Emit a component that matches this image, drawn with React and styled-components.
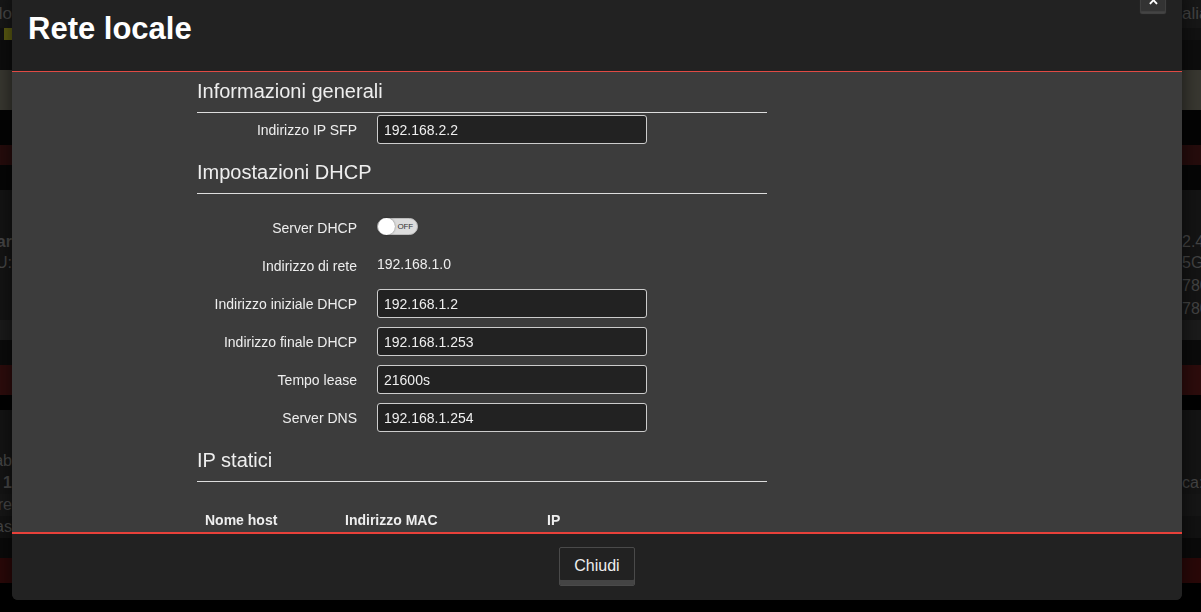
import React from 'react';
import styled, { createGlobalStyle } from 'styled-components';

const GlobalStyle = createGlobalStyle`
  html, body {
    margin: 0;
    padding: 0;
    height: 100%;
    background: #000;
    overflow: hidden;
  }
  body {
    font-family: "Liberation Sans", Arial, sans-serif;
    color: #eee;
  }
`;

// page behind the dialog, dimmed
const bands = [
  { h: 28, bg: '#171717', left: 'Pannello', right: 'alia', size: 17 },
  { h: 12, bg: '#121212', accent: '#5c5c12' },
  { h: 30, bg: '#0d0d0d' },
  { h: 40, bg: '#393831' },
  { h: 35, bg: '#040404' },
  { h: 20, bg: '#260c0c' },
  { h: 25, bg: '#060606' },
  { h: 42, bg: '#141414' },
  { h: 20, bg: '#141414', left: 'Standar', right: '2.4G', bold: true },
  { h: 22, bg: '#141414', left: 'SSID U:', right: '5GH' },
  { h: 24, bg: '#141414', right: '780' },
  { h: 22, bg: '#141414', right: '780' },
  { h: 20, bg: '#1b1b1b' },
  { h: 25, bg: '#0b0b0b' },
  { h: 30, bg: '#2d0c0c' },
  { h: 15, bg: '#020202' },
  { h: 40, bg: '#141414' },
  { h: 22, bg: '#141414', left: 'Tab' },
  { h: 22, bg: '#141414', left: '1', right: 'ca:', bold: true },
  { h: 22, bg: '#161616', left: 'Ore' },
  { h: 22, bg: '#121212', left: 'Bas' },
  { h: 20, bg: '#0a0a0a' },
  { h: 25, bg: '#2a0808' },
  { h: 60, bg: '#000' },
];

export default function App() {
  return (
    <>
      <GlobalStyle />
      <Page>
        {bands.map((b, i) => (
          <Band key={i} $h={b.h} $bg={b.bg}>
            <LeftEdge $size={b.size} $bold={b.bold}>
              {b.accent ? <Accent $color={b.accent} /> : <EdgeText>{b.left}</EdgeText>}
            </LeftEdge>
            <RightEdge $size={b.size}>{b.right}</RightEdge>
          </Band>
        ))}
      </Page>

      <Dialog>
        <CloseBtn>✕</CloseBtn>
        <Header>
          <Title>Rete locale</Title>
        </Header>

        <Body>
          <Column>
            <SectionTitle>Informazioni generali</SectionTitle>
            <Row $top={2}>
              <Label>Indirizzo IP SFP</Label>
              <Input defaultValue="192.168.2.2" />
            </Row>

            <SectionTitle $top={16}>Impostazioni DHCP</SectionTitle>
            <Row $top={19}>
              <Label>Server DHCP</Label>
              <Switch>
                <Knob />
                <SwitchText>OFF</SwitchText>
              </Switch>
            </Row>
            <Row>
              <Label>Indirizzo di rete</Label>
              <Value>192.168.1.0</Value>
            </Row>
            <Row>
              <Label>Indirizzo iniziale DHCP</Label>
              <Input defaultValue="192.168.1.2" />
            </Row>
            <Row>
              <Label>Indirizzo finale DHCP</Label>
              <Input defaultValue="192.168.1.253" />
            </Row>
            <Row>
              <Label>Tempo lease</Label>
              <Input defaultValue="21600s" />
            </Row>
            <Row>
              <Label>Server DNS</Label>
              <Input defaultValue="192.168.1.254" />
            </Row>

            <SectionTitle $top={16}>IP statici</SectionTitle>
            <Table>
              <thead>
                <tr>
                  <Th $w={140}>Nome host</Th>
                  <Th $w={202}>Indirizzo MAC</Th>
                  <Th $w={228}>IP</Th>
                </tr>
              </thead>
              <tbody>
                <tr>
                  <Td>gateway</Td>
                  <Td>00:00:00:00:00:00</Td>
                  <Td>192.168.1.10</Td>
                </tr>
              </tbody>
            </Table>
          </Column>
        </Body>

        <Footer>
          <Button>Chiudi</Button>
        </Footer>
      </Dialog>
    </>
  );
}

const Page = styled.div`
  display: flex;
  flex-direction: column;
  height: 612px;
  overflow: hidden;
`;

const Band = styled.div`
  flex: 0 0 ${(p) => p.$h}px;
  background: ${(p) => p.$bg};
  display: flex;
  justify-content: space-between;
  align-items: center;
  overflow: hidden;
`;

const LeftEdge = styled.div`
  width: 12px;
  overflow: hidden;
  display: flex;
  justify-content: flex-end;
  white-space: nowrap;
  font-size: ${(p) => p.$size || 16}px;
  font-weight: ${(p) => (p.$bold ? 'bold' : 'normal')};
  color: #474747;
`;

const EdgeText = styled.span`
  flex-shrink: 0;
`;

const RightEdge = styled.div`
  width: 19px;
  white-space: nowrap;
  font-size: ${(p) => p.$size || 16}px;
  color: #444;
  overflow: hidden;
`;

const Accent = styled.span`
  display: block;
  width: 8px;
  height: 12px;
  background: ${(p) => p.$color};
`;

const Dialog = styled.div`
  position: fixed;
  left: 12px;
  top: -10px;
  width: 1170px;
  height: 610px;
  display: flex;
  flex-direction: column;
  border-radius: 6px;
  overflow: hidden;
  background: #222;
  box-shadow: 0 0 20px rgba(0, 0, 0, 0.6);
`;

const CloseBtn = styled.div`
  position: absolute;
  top: -4px;
  right: 16px;
  width: 26px;
  height: 26px;
  box-sizing: border-box;
  background: #333;
  border: 1px solid #3f3f3f;
  border-radius: 2px;
  box-shadow: 0 2px 1px #444;
  display: flex;
  align-items: flex-end;
  justify-content: center;
  padding-bottom: 4px;
  color: #fff;
  font-size: 13px;
  font-weight: bold;
  line-height: 1;
`;

const Header = styled.div`
  flex: 0 0 81px;
  background: #222;
  border-bottom: 1px solid #e04a44;
  padding: 0 16px;
  display: flex;
  align-items: flex-start;
`;

const Title = styled.h1`
  margin: 21px 0 0;
  font-size: 31px;
  line-height: 36px;
  font-weight: bold;
  color: #fff;
`;

const Body = styled.div`
  flex: 0 0 460px;
  background: #3c3c3c;
  overflow: hidden;
  border-bottom: 2px solid #e8413a;
`;

const Column = styled.div`
  width: 570px;
  margin-left: 185px;
  padding-top: 7px;
`;

const SectionTitle = styled.h3`
  margin: ${(p) => p.$top || 0}px 0 0;
  padding-bottom: 9px;
  font-size: 20px;
  line-height: 24px;
  font-weight: normal;
  color: #eee;
  border-bottom: 1px solid #ddd;
`;

const Row = styled.div`
  display: grid;
  grid-template-columns: 160px 270px;
  column-gap: 20px;
  align-items: center;
  height: 29px;
  margin-top: ${(p) => (p.$top === undefined ? 9 : p.$top)}px;
`;

const Label = styled.label`
  text-align: right;
  font-size: 14px;
  color: #eee;
`;

const Value = styled.span`
  font-size: 14px;
  color: #eee;
  margin-top: -4px;
`;

const Input = styled.input`
  box-sizing: border-box;
  width: 270px;
  height: 29px;
  background: #222;
  border: 1px solid #ccc;
  border-radius: 3px;
  padding: 0 6px;
  font-family: inherit;
  font-size: 14px;
  color: #eee;
  outline: none;
`;

const Switch = styled.div`
  position: relative;
  width: 41px;
  height: 17px;
  box-sizing: border-box;
  border-radius: 9px;
  background: #dcdcdc;
  border: 1px solid #bbb;
  display: flex;
  align-items: center;
  justify-content: flex-end;
  padding-right: 4px;
  margin-top: -2px;
`;

const Knob = styled.span`
  position: absolute;
  left: 0;
  top: -1px;
  width: 17px;
  height: 17px;
  border-radius: 50%;
  background: #fff;
  box-shadow: 0 0 2px rgba(0, 0, 0, 0.5);
`;

const SwitchText = styled.span`
  font-size: 8px;
  color: #333;
  letter-spacing: -0.2px;
`;

const Table = styled.table`
  width: 570px;
  table-layout: fixed;
  margin-top: 22px;
  border-collapse: collapse;
`;

const Th = styled.th`
  box-sizing: border-box;
  width: ${(p) => p.$w}px;
  text-align: left;
  padding: 8px 8px;
  font-size: 14px;
  line-height: 17px;
  font-weight: bold;
  color: #eee;
`;

const Td = styled.td`
  padding: 8px;
  font-size: 14px;
  color: #eee;
`;

const Footer = styled.div`
  flex: 1;
  background: #222;
  display: flex;
  justify-content: center;
  align-items: flex-start;
  padding-top: 13px;
`;

const Button = styled.button`
  width: 76px;
  height: 39px;
  box-sizing: border-box;
  background: #222;
  border: 1px solid #4a4a4a;
  border-radius: 2px;
  box-shadow: inset 0 -5px 0 #444;
  padding: 0 0 2px;
  font-family: inherit;
  font-size: 16px;
  color: #eee;
`;
